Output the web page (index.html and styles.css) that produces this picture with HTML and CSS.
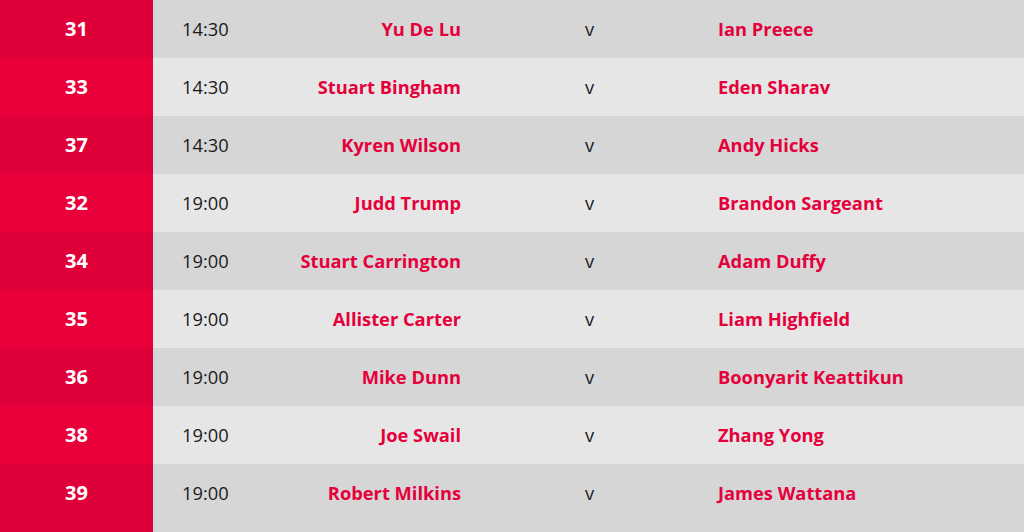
FILE: index.html
```html
<!DOCTYPE html>
<html>
<head>
<meta charset="utf-8">
<link rel="stylesheet" href="styles.css">
</head>
<body>
<div class="fixtures">
  <div class="row odd"><div class="num">31</div><div class="time">14:30</div><div class="p1">Yu De Lu</div><div class="vs">v</div><div class="p2">Ian Preece</div></div>
  <div class="row even"><div class="num">33</div><div class="time">14:30</div><div class="p1">Stuart Bingham</div><div class="vs">v</div><div class="p2">Eden Sharav</div></div>
  <div class="row odd"><div class="num">37</div><div class="time">14:30</div><div class="p1">Kyren Wilson</div><div class="vs">v</div><div class="p2">Andy Hicks</div></div>
  <div class="row even"><div class="num">32</div><div class="time">19:00</div><div class="p1">Judd Trump</div><div class="vs">v</div><div class="p2">Brandon Sargeant</div></div>
  <div class="row odd"><div class="num">34</div><div class="time">19:00</div><div class="p1">Stuart Carrington</div><div class="vs">v</div><div class="p2">Adam Duffy</div></div>
  <div class="row even"><div class="num">35</div><div class="time">19:00</div><div class="p1">Allister Carter</div><div class="vs">v</div><div class="p2">Liam Highfield</div></div>
  <div class="row odd"><div class="num">36</div><div class="time">19:00</div><div class="p1">Mike Dunn</div><div class="vs">v</div><div class="p2">Boonyarit Keattikun</div></div>
  <div class="row even"><div class="num">38</div><div class="time">19:00</div><div class="p1">Joe Swail</div><div class="vs">v</div><div class="p2">Zhang Yong</div></div>
  <div class="row odd last"><div class="num">39</div><div class="time">19:00</div><div class="p1">Robert Milkins</div><div class="vs">v</div><div class="p2">James Wattana</div></div>
</div>
</body>
</html>
```
FILE: styles.css
```css
html, body {
  margin: 0;
  padding: 0;
}
body {
  font-family: "Open Sans", "Liberation Sans", sans-serif;
  background: #d6d6d6;
}
.fixtures {
  display: flex;
  flex-direction: column;
}
.row {
  display: grid;
  grid-template-columns: 153px 120px 188px 257px 1fr;
  height: 58px;
  align-items: center;
  font-size: 18.3px;
}
.row.odd { background: #d6d6d6; }
.row.even { background: #e6e6e6; }
.row.last {
  height: 68px;
  align-items: start;
}
.row > div {
  line-height: 58px;
}
.num {
  height: 100%;
  text-align: center;
  color: #fff;
  font-weight: 700;
  font-size: 20px;
}
.odd .num { background: #df0039; }
.even .num { background: #e9003b; }
.time {
  padding-left: 29px;
  color: #1a1a1a;
}
.p1 {
  text-align: right;
  color: #e5003b;
  font-weight: 700;
  font-size: 18.3px;
}
.vs {
  text-align: center;
  color: #1a1a1a;
}
.p2 {
  color: #e5003b;
  font-weight: 700;
  font-size: 18.3px;
}
```
